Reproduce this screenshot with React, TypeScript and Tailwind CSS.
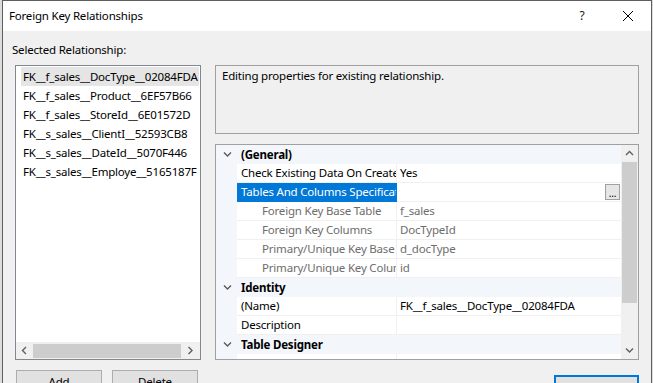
import React from "react";

const relationships = [
  "FK__f_sales__DocType__02084FDA",
  "FK__f_sales__Product__6EF57B66",
  "FK__f_sales__StoreId__6E01572D",
  "FK__s_sales__ClientI__52593CB8",
  "FK__s_sales__DateId__5070F446",
  "FK__s_sales__Employe__5165187F",
];

type GridRow =
  | { kind: "cat"; label: string }
  | {
      kind: "prop";
      name: string;
      value?: string;
      sub?: boolean;
      selected?: boolean;
      button?: boolean;
    };

const rows: GridRow[] = [
  { kind: "cat", label: "(General)" },
  { kind: "prop", name: "Check Existing Data On Create Or Re-Enabling", value: "Yes" },
  { kind: "prop", name: "Tables And Columns Specification", selected: true, button: true },
  { kind: "prop", name: "Foreign Key Base Table", value: "f_sales", sub: true },
  { kind: "prop", name: "Foreign Key Columns", value: "DocTypeId", sub: true },
  { kind: "prop", name: "Primary/Unique Key Base Table", value: "d_docType", sub: true },
  { kind: "prop", name: "Primary/Unique Key Columns", value: "id", sub: true },
  { kind: "cat", label: "Identity" },
  { kind: "prop", name: "(Name)", value: "FK__f_sales__DocType__02084FDA" },
  { kind: "prop", name: "Description", value: "" },
  { kind: "cat", label: "Table Designer" },
  { kind: "prop", name: "", value: "" },
];

const Chevron = ({ dir = "down", className = "" }: { dir?: "down" | "up" | "left" | "right"; className?: string }) => {
  const d = {
    down: "M1 1.5 L4.5 5 L8 1.5",
    up: "M1 5 L4.5 1.5 L8 5",
    left: "M5 1 L1.5 4.5 L5 8",
    right: "M1.5 1 L5 4.5 L1.5 8",
  }[dir];
  const vertical = dir === "down" || dir === "up";
  return (
    <svg
      width={vertical ? 9 : 7}
      height={vertical ? 7 : 9}
      viewBox={vertical ? "0 0 9 7" : "0 0 7 9"}
      className={className}
    >
      <path d={d} fill="none" stroke="currentColor" strokeWidth="1.4" />
    </svg>
  );
};

const PropertyGrid = () => (
  <div className="flex h-[216px] border border-[#a0a0a0] bg-white">
    <div className="flex-1 overflow-hidden">
      {rows.map((row, i) =>
        row.kind === "cat" ? (
          <div key={i} className="flex h-[19px] items-center bg-[#f3f6fb]">
            <div className="flex w-[21px] justify-center pl-[1px] text-[#5a5a5a]">
              <Chevron />
            </div>
            <span className="pl-[4px] font-bold">{row.label}</span>
          </div>
        ) : (
          <div key={i} className="flex h-[19px]">
            <div className="w-[21px] shrink-0 bg-[#f3f6fb]" />
            <div
              className={`w-[160px] shrink-0 overflow-hidden whitespace-nowrap border-b border-r leading-[18px] ${
                row.selected
                  ? "border-[#0078d7] bg-[#0078d7] text-white"
                  : "border-[#f0f0f0]"
              } ${row.sub ? "pl-[25px] text-[#6d6d6d]" : "pl-[4px]"}`}
            >
              {row.name}
            </div>
            <div
              className={`flex flex-1 items-center justify-between overflow-hidden whitespace-nowrap border-b border-[#f0f0f0] pl-[3px] leading-[18px] ${
                row.sub ? "text-[#6d6d6d]" : ""
              }`}
            >
              <span>{row.value}</span>
              {row.button && (
                <div className="mr-[1px] flex h-[16px] w-[15px] items-end justify-center border border-[#a0a0a0] bg-[#e6e6e6] pb-[1px] text-[10px] leading-none">
                  ...
                </div>
              )}
            </div>
          </div>
        )
      )}
    </div>
    <div className="flex w-[17px] flex-col items-center bg-[#f0f0f0] text-[#606060]">
      <div className="flex h-[17px] items-center justify-center">
        <Chevron dir="up" />
      </div>
      <div className="h-[141px] w-[15px] bg-[#cdcdcd]" />
      <div className="flex-1" />
      <div className="flex h-[17px] items-center justify-center">
        <Chevron dir="down" />
      </div>
    </div>
  </div>
);

export default function App() {
  return (
    <div className="h-[383px] w-[653px] overflow-hidden bg-[#dcdcdc] pl-[2px] text-[11.5px] tracking-[-0.2px] text-black [font-family:'Noto_Sans',sans-serif]">
      <div className="flex h-full w-[650px] flex-col border-x border-t border-[#5f5f5f] bg-[#f0f0f0]">
        <div className="flex h-[30px] shrink-0 items-center bg-white">
          <span className="pl-[6px]">Foreign Key Relationships</span>
          <div className="ml-auto flex h-full">
            <div className="flex w-[46px] items-center justify-center text-[12px] text-[#222]">?</div>
            <div className="flex w-[46px] items-center justify-center">
              <svg width="10" height="10" viewBox="0 0 10 10">
                <path d="M0 0 L10 10 M10 0 L0 10" stroke="#000" strokeWidth="1" />
              </svg>
            </div>
          </div>
        </div>

        <div className="flex flex-1 flex-col pl-[12px] pt-[10px]">
          <div className="ml-[-3px] mb-[6px] leading-[18px]">Selected Relationship:</div>
          <div className="flex gap-[14px]">
            <div className="flex w-[186px] flex-col">
              <div className="flex h-[295px] flex-col border border-[#828790] bg-white">
                <div className="flex-1 pt-[1px]">
                  {relationships.map((r, i) => (
                    <div
                      key={r}
                      className={`ml-[5px] mr-[1px] h-[19px] whitespace-nowrap pl-[2px] leading-[19px] ${
                        i === 0 ? "bg-[#e5e5e5]" : ""
                      }`}
                    >
                      {r}
                    </div>
                  ))}
                </div>
                <div className="flex h-[17px] items-center bg-[#f0f0f0] text-[#606060]">
                  <div className="flex w-[17px] justify-center">
                    <Chevron dir="left" />
                  </div>
                  <div className="h-[14px] w-[148px] bg-[#cdcdcd]" />
                  <div className="flex flex-1 justify-center">
                    <Chevron dir="right" />
                  </div>
                </div>
              </div>
              <div className="ml-[1px] mt-[10px] flex gap-[10px]">
                <div className="flex h-[23px] w-[86px] items-center justify-center border border-[#adadad] bg-[#e1e1e1]">
                  Add
                </div>
                <div className="flex h-[23px] w-[86px] items-center justify-center border border-[#adadad] bg-[#e1e1e1]">
                  Delete
                </div>
              </div>
            </div>

            <div className="flex w-[424px] flex-col">
              <div className="h-[69px] border border-[#a0a0a0] px-[6px] pt-[1px] leading-[18px]">
                Editing properties for existing relationship.
              </div>
              <div className="mt-[10px]">
                <PropertyGrid />
              </div>
              <div className="mt-[15px] flex justify-end">
                <div className="flex h-[23px] w-[85px] items-center justify-center border-2 border-[#0078d7] bg-[#e1e1e1]">
                  Close
                </div>
              </div>
            </div>
          </div>
        </div>
      </div>
    </div>
  );
}
